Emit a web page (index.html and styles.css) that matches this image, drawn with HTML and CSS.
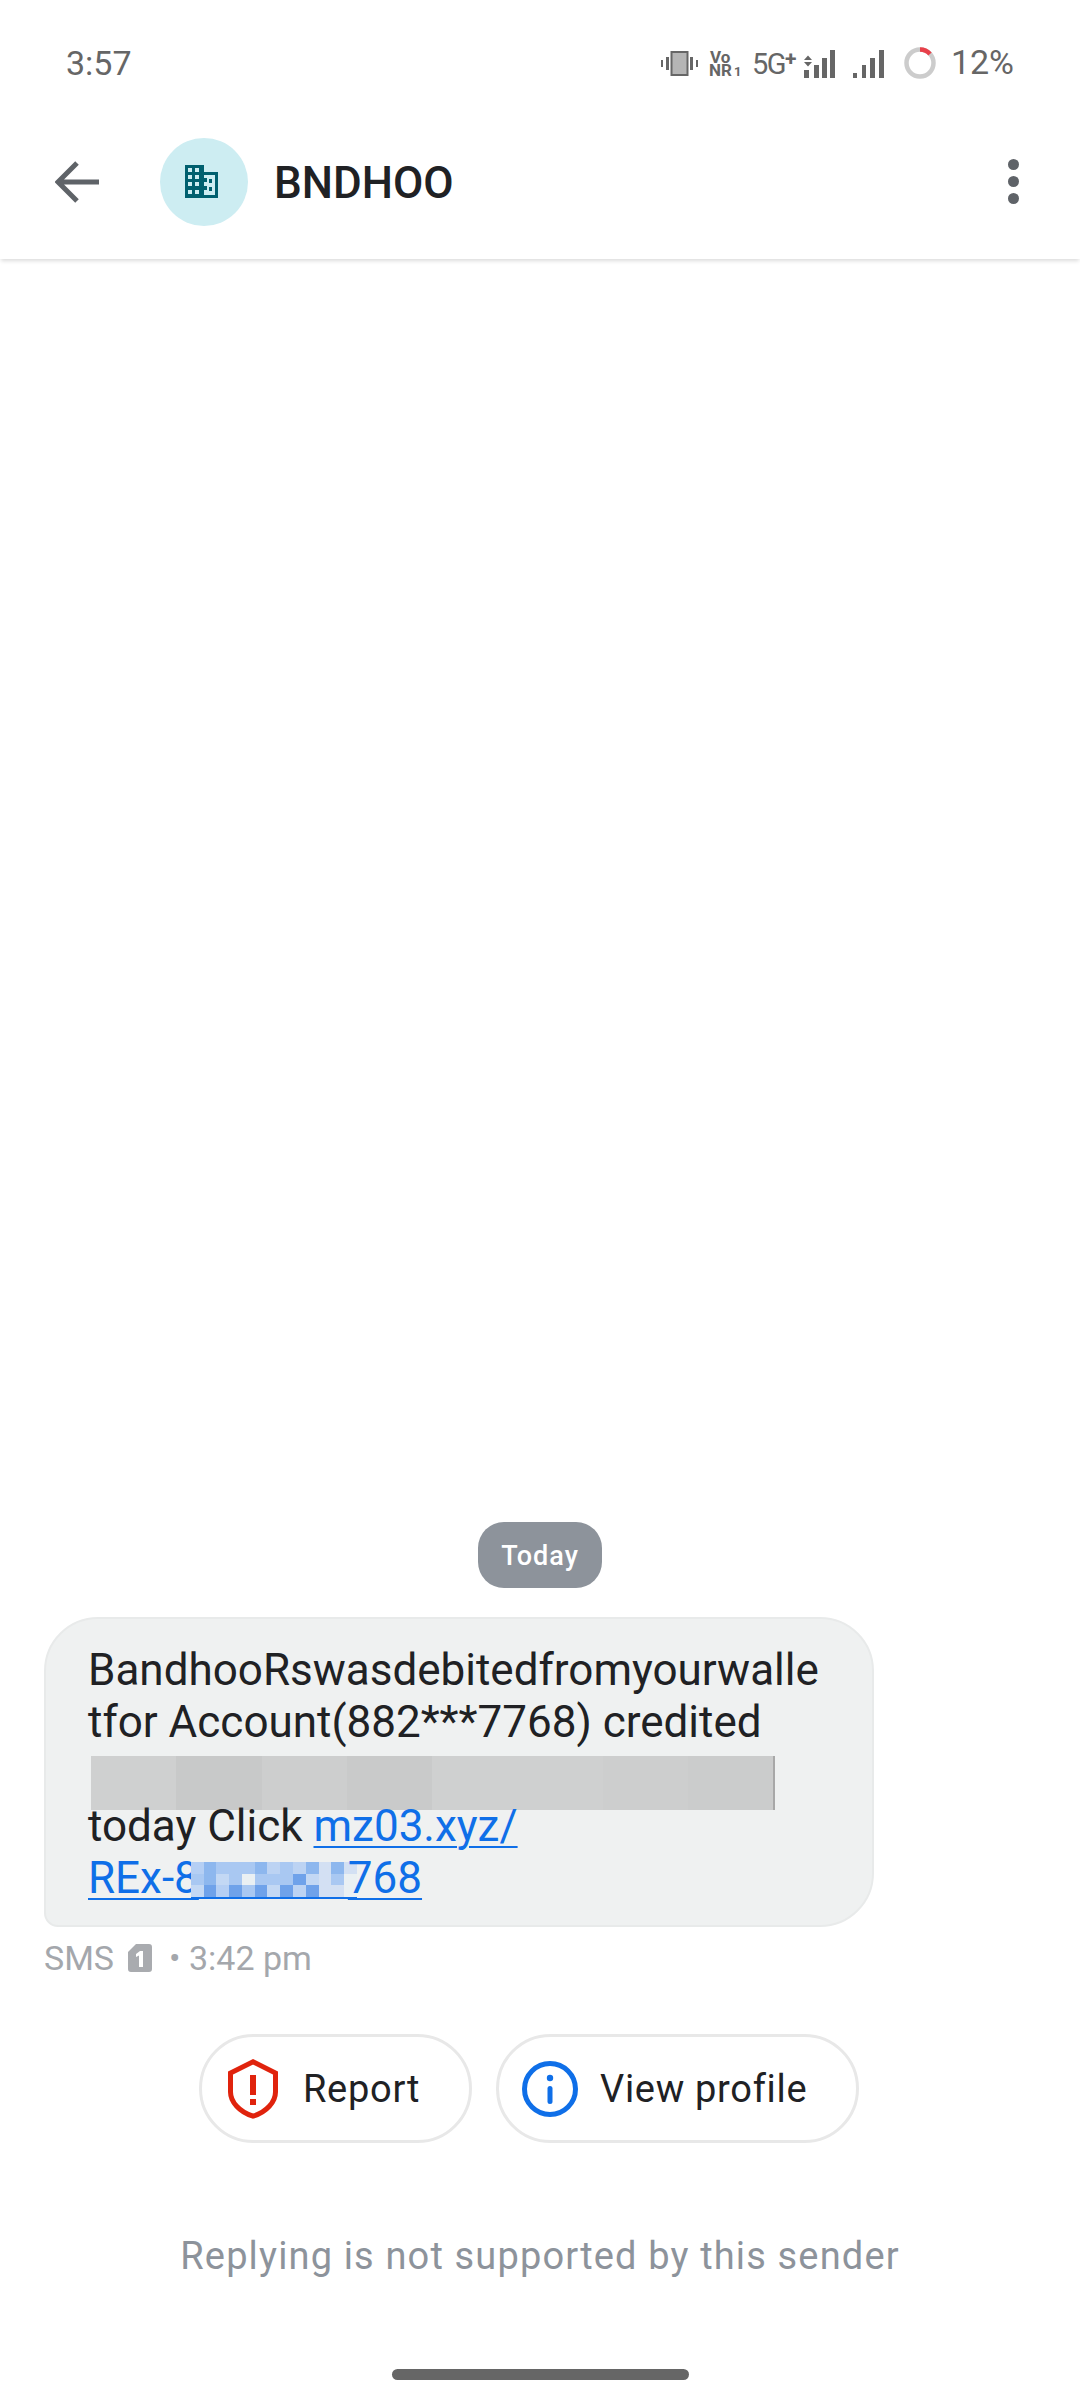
FILE: index.html
```html
<!DOCTYPE html>
<html lang="en">
<head>
<meta charset="utf-8">
<title>BNDHOO</title>
<link rel="stylesheet" href="styles.css">
</head>
<body>
<div class="screen">
  <div class="status">
    <span class="time">3:57</span>
    <div class="status-icons">
      <svg class="i-vib" viewBox="0 0 37 25"><path fill="#666" d="M0 9h2v7H0zM5 6h3v13H5zM29 6h3v13h-3zM35 9h2v7h-2z"/><rect x="10.500" y="1" width="16" height="23" fill="#b5b5b5" stroke="#666" stroke-width="2"/></svg>
      <svg class="i-vonr" viewBox="0 0 32 26"><text class="vonr-text" x="1" y="12">Vo</text><text class="vonr-text" x="0" y="25">NR<tspan class="vonr-sub" dx="2">1</tspan></text></svg>
      <span class="fiveg">5G<sup>+</sup></span>
      <svg class="i-sig" viewBox="0 0 32 28"><path fill="#666" d="M1 10l4-4.500L9 10zM1 12h8l-4 4.500zM1 20h5v8H1zM11 15h5v13h-5zM19 8h5v20h-5zM27 0h5v28h-5z"/></svg>
      <svg class="i-sig2" viewBox="0 0 31 28"><path fill="#666" d="M0 23h4v5H0zM9 15h4v13H9zM17 8h5v20h-5zM26 0h5v28h-5z"/></svg>
      <svg class="i-ring" viewBox="0 0 32 32"><circle cx="16" cy="16" r="13.500" fill="none" stroke="#ccc" stroke-width="4.500"/><path d="M16 2.500A13.500 13.500 0 0 1 26 7" fill="none" stroke="#e8404a" stroke-width="4.500"/></svg>
      <span class="batt">12%</span>
    </div>
  </div>

  <header class="appbar">
    <svg class="i-back" viewBox="0 0 44 44"><path d="M44 22H5M22 3L3 22l19 19" fill="none" stroke="#5f6368" stroke-width="5"/></svg>
    <div class="avatar">
      <svg class="i-bldg" viewBox="0 0 33 33"><path fill="#00606f" fill-rule="evenodd" d="M0 0h19v7h14v26H0zM3 3v4h4V3zM10 3v4h4V3zM3 10v4h4v-4zM10 10v4h4v-4zM3 17v4h4v-4zM10 17v4h4v-4zM3 25v4h4v-4zM10 25v4h4v-4zM19 10v3h3v4h-3v4h3v4h-3v5h11V10z"/><path fill="#00606f" d="M24 14h3v4h-3zM24 22h3v4h-3z"/></svg>
    </div>
    <h1 class="title">BNDHOO</h1>
    <svg class="i-more" viewBox="0 0 11 45"><circle cx="5.500" cy="5.500" r="5.500"/><circle cx="5.500" cy="22.500" r="5.500"/><circle cx="5.500" cy="39.500" r="5.500"/></svg>
  </header>

  <main class="thread">
    <div class="date-row"><span class="date">Today</span></div>
    <div class="bubble">
      <div class="line">BandhooRswasdebitedfromyourwalle</div>
      <div class="line">tfor Account(882***7768) credited</div>
      <div class="redact">
        <span class="r1"></span><span class="r2"></span><span class="r3"></span><span class="r4"></span><span class="r1"></span><span class="r1"></span><span class="r3"></span><span class="r5"></span>
      </div>
      <div class="line">today Click <a class="link">mz03.xyz/</a></div>
      <div class="line"><a class="link">REx-8<span class="pix"><span class="pix-grid">
        <i class="p3"></i><i class="p2"></i><i class="p4"></i><i class="p4"></i><i class="p4"></i><i class="p2"></i><i class="p5"></i><i class="p4"></i><i class="p5"></i><i class="p2"></i><i class="p7"></i><i class="p2"></i><i class="p7"></i>
        <i class="p4"></i><i class="p2"></i><i class="p6"></i><i class="p4"></i><i class="p8"></i><i class="p4"></i><i class="p4"></i><i class="p4"></i><i class="p1"></i><i class="p6"></i><i class="p7"></i><i class="p4"></i><i class="p8"></i>
        <i class="p6"></i><i class="p1"></i><i class="p3"></i><i class="p1"></i><i class="p4"></i><i class="p1"></i><i class="p6"></i><i class="p1"></i><i class="p5"></i><i class="p1"></i><i class="p7"></i><i class="p7"></i><i class="p8"></i>
      </span></span>768</a></div>
    </div>
    <div class="meta">
      <span>SMS</span>
      <svg class="i-sim" viewBox="0 0 24 28"><path fill="#a9abaf" fill-rule="evenodd" d="M8 0h13a3 3 0 0 1 3 3v22a3 3 0 0 1-3 3H3a3 3 0 0 1-3-3V8zM12 7L8 10v3l3-1.500V23h4V7z"/></svg>
      <span>• 3:42 pm</span>
    </div>
    <div class="actions">
      <button class="chip chip-report">
        <svg class="i-shield" viewBox="0 0 50 60"><path d="M25 2.800L47.500 14v19c0 10-9 20-22.500 24.200C11.500 53 2.500 43 2.500 33V14z" fill="none" stroke="#e0230d" stroke-width="5"/><path fill="#e0230d" d="M22 16h6v20h-6zM22 40h6v6h-6z"/></svg>
        <span>Report</span>
      </button>
      <button class="chip chip-profile">
        <svg class="i-info" viewBox="0 0 56 56"><circle cx="28" cy="28" r="25.500" fill="none" stroke="#0f6fe8" stroke-width="5"/><circle cx="28" cy="17" r="3.200" fill="#0f6fe8"/><rect x="25.500" y="25" width="5" height="18" rx="2.500" fill="#0f6fe8"/></svg>
        <span>View profile</span>
      </button>
    </div>
    <p class="noreply">Replying is not supported by this sender</p>
  </main>
  <div class="home-wrap"><div class="home"></div></div>
</div>
</body>
</html>
```

FILE: styles.css
```css
* { box-sizing: border-box; }
html, body { margin: 0; padding: 0; background: #fff; }
body { font-family: Roboto, "Liberation Sans", sans-serif; }
.screen { width: 1080px; height: 2408px; display: flex; flex-direction: column; overflow: hidden; background: #fff; color: #202124; }

.status { height: 82px; flex: none; display: flex; justify-content: space-between; align-items: flex-start; padding: 45px 66px 0 66px; color: #666; background: #fff; position: relative; z-index: 1; }
.time { font-size: 34px; line-height: 37px; }
.status-icons { display: flex; align-items: flex-start; margin-top: -1px; }
.status-icons svg { display: block; flex: none; }
.i-vib { width: 37px; height: 25px; margin: 7px 11px 0 0; }
.i-vonr { width: 32px; height: 26px; margin: 7px 11px 0 0; overflow: visible; }
.vonr-text { font-size: 17px; font-weight: 700; fill: #666; }
.vonr-sub { font-size: 13px; }
.fiveg { width: 42px; margin: 2px 9px 0 0; font-size: 29px; line-height: 36px; letter-spacing: -1.500px; white-space: nowrap; }
.fiveg sup { font-size: 21px; font-weight: 700; line-height: 0; vertical-align: 8px; }
.i-sig { width: 32px; height: 28px; margin: 6px 18px 0 0; }
.i-sig2 { width: 31px; height: 28px; margin: 6px 20px 0 0; }
.i-ring { width: 32px; height: 32px; margin: 3px 15px 0 0; }
.batt { font-size: 34px; line-height: 37px; }

.appbar { height: 177px; flex: none; display: flex; align-items: center; padding: 22px 61px 0 55px; background: #fff; box-shadow: 0 3px 4px -1px rgba(0,0,0,.14); position: relative; }
.i-back { width: 44px; height: 44px; flex: none; }
.avatar { width: 88px; height: 88px; margin-left: 61px; padding-right: 5px; border-radius: 50%; background: #cdedf2; display: flex; align-items: center; justify-content: center; flex: none; }
.i-bldg { width: 33px; height: 33px; display: block; }
.title { margin: 2px 0 0 26px; flex: 1; font-size: 44px; line-height: 50px; font-weight: 500; letter-spacing: 0; color: #202124; }
.i-more { width: 11px; height: 45px; fill: #5f6368; flex: none; }

.thread { flex: 1; display: flex; flex-direction: column; justify-content: flex-end; min-height: 0; }
.date-row { display: flex; justify-content: center; margin-bottom: 29px; }
.date { width: 124px; height: 66px; padding-top: 2px; border-radius: 26px; background: #8d939b; color: #fff; display: flex; align-items: center; justify-content: center; font-size: 27px; font-weight: 500; letter-spacing: 1px; }

.bubble { width: 830px; height: 310px; margin-left: 44px; padding: 25px 0 0 42px; background: #eff1f1; border: 2px solid #e8eaea; border-radius: 54px 54px 54px 14px; font-size: 44px; line-height: 52px; color: #202124; white-space: nowrap; }
.line { height: 52px; }
.link { color: #0f6fe8; text-decoration: underline; text-decoration-thickness: 2px; text-underline-offset: 5px; }
.redact { width: 684px; height: 54px; margin: 8px 0 -10px 3px; display: flex; border-right: 2px solid #a8a8a8; }
.redact span { display: block; flex: 1; }
.r1 { background: #cfd0d0; }
.r2 { background: #c8c9c9; }
.r3 { background: #cdcece; }
.r4 { background: #c9caca; }
.r5 { background: #cbcccc; }
.pix { display: inline-block; overflow: hidden; width: 166px; height: 37px; margin: 0 -9px -6px -8px; border-bottom: 2px solid #0f6fe8; vertical-align: baseline; }
.pix-grid { display: grid; grid-template-columns: repeat(13, 1fr); grid-template-rows: repeat(3, 1fr); height: 35px; }
.pix i { display: block; }
.p1 { background: #6fa2ea; }
.p2 { background: #8db7ee; }
.p3 { background: #b5cff4; }
.p4 { background: #a9c8f2; }
.p5 { background: #bcd3f3; }
.p6 { background: #c3d8f4; }
.p7 { background: #d3e0f3; }
.p8 { background: #eaf0f3; }

.meta { display: flex; align-items: center; margin: 11px 0 0 44px; height: 40px; font-size: 34px; color: #a4a7ac; }
.i-sim { width: 24px; height: 28px; margin: 0 17px 0 14px; display: block; }

.actions { display: flex; justify-content: flex-start; margin: 56px 0 0 199px; gap: 24px; }
.chip { height: 109px; padding: 0; display: flex; align-items: center; background: #fff; border: 3px solid #e8e8e8; border-radius: 55px; font-family: inherit; font-size: 38px; color: #202124; letter-spacing: .7px; }
.chip-report { width: 273px; padding-left: 26px; }
.chip-profile { width: 363px; padding-left: 23px; }
.i-shield { width: 50px; height: 60px; margin-right: 25px; flex: none; }
.i-info { width: 56px; height: 56px; margin-right: 22px; flex: none; }

.noreply { margin: 91px 0 0; text-align: center; font-size: 38px; line-height: 44px; letter-spacing: 1.150px; color: #8d939b; }

.home-wrap { height: 39px; flex: none; margin-top: 91px; }
.home { width: 297px; height: 11px; margin: 0 auto; border-radius: 6px; background: #666; }
```
